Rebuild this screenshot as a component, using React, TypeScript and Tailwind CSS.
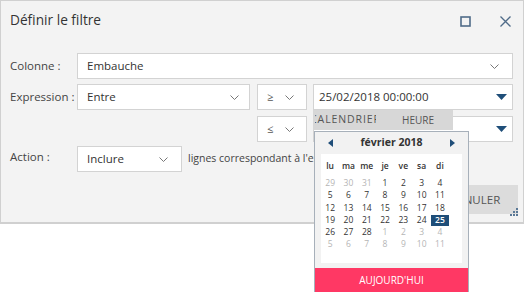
import React from "react";

const Chevron = () => (
  <svg width="9" height="5" viewBox="0 0 9 5" className="shrink-0">
    <path d="M0.5 0.5 L4.5 4.5 L8.5 0.5" fill="none" stroke="#777" strokeWidth="1" />
  </svg>
);

const Tri = () => (
  <svg width="11" height="6" viewBox="0 0 11 6" className="shrink-0">
    <path d="M0 0 H11 L5.5 6 Z" fill="#1f4e79" />
  </svg>
);

const weeks: [string, boolean][][] = [
  [["29", false], ["30", false], ["31", false], ["1", true], ["2", true], ["3", true], ["4", true]],
  [["5", true], ["6", true], ["7", true], ["8", true], ["9", true], ["10", true], ["11", true]],
  [["12", true], ["13", true], ["14", true], ["15", true], ["16", true], ["17", true], ["18", true]],
  [["19", true], ["20", true], ["21", true], ["22", true], ["23", true], ["24", true], ["25", true]],
  [["26", true], ["27", true], ["28", true], ["1", false], ["2", false], ["3", false], ["4", false]],
  [["5", false], ["6", false], ["7", false], ["8", false], ["9", false], ["10", false], ["11", false]],
];

export default function App() {
  return (
    <div className="relative w-[525px] h-[292px] overflow-hidden bg-white font-['Open_Sans',sans-serif] text-[11.5px] text-[#333]">
      {/* Dialog */}
      <div className="relative w-[524px] h-[224px] border border-b-2 border-[#d0d0d0] bg-[#f3f3f3] flex flex-col">
        {/* Header */}
        <div className="h-[40px] flex items-center justify-between pl-[9px] pr-[12px]">
          <span className="text-[13.7px] text-[#333] -mt-[1px]">Définir le filtre</span>
          <div className="flex items-center gap-[29px]">
            <svg width="11" height="11" viewBox="0 0 11 11">
              <rect x="1" y="1" width="9" height="9" fill="none" stroke="#4f6b88" strokeWidth="1.6" />
            </svg>
            <svg width="11" height="11" viewBox="0 0 11 11">
              <path d="M0.5 0.5 L10.5 10.5 M10.5 0.5 L0.5 10.5" stroke="#4f6b88" strokeWidth="1.3" />
            </svg>
          </div>
        </div>

        {/* Colonne */}
        <div className="mt-[12px] flex items-center pl-[9px]">
          <span className="w-[67px] text-[#444]">Colonne :</span>
          <div className="w-[436px] h-[26px] bg-white border border-[#d3d3d3] flex items-center justify-between pl-[9px] pr-[13px]">
            <span>Embauche</span>
            <Chevron />
          </div>
        </div>

        {/* Expression */}
        <div className="mt-[5px] flex items-center pl-[9px]">
          <span className="w-[67px] text-[#444]">Expression :</span>
          <div className="w-[173px] h-[26px] bg-white border border-[#d3d3d3] flex items-center justify-between pl-[9px] pr-[10px]">
            <span>Entre</span>
            <Chevron />
          </div>
          <div className="ml-[7px] w-[50px] h-[26px] bg-white border border-[#d3d3d3] flex items-center justify-between pl-[9px] pr-[12px]">
            <span className="text-[11px] text-[#555]">≥</span>
            <Chevron />
          </div>
          <div className="ml-[6px] w-[200px] h-[26px] bg-white border border-[#d3d3d3] flex items-center justify-between pl-[5px] pr-[5px]">
            <span>25/02/2018 00:00:00</span>
            <Tri />
          </div>
        </div>

        {/* Expression second line */}
        <div className="mt-[6px] flex items-center pl-[256px]">
          <div className="w-[50px] h-[26px] bg-white border border-[#d3d3d3] flex items-center justify-between pl-[9px] pr-[12px]">
            <span className="text-[11px] text-[#555]">≤</span>
            <Chevron />
          </div>
          <div className="ml-[6px] w-[200px] h-[26px] bg-white border border-[#d3d3d3] flex items-center justify-end pr-[5px]">
            <Tri />
          </div>
        </div>

        {/* Action */}
        <div className="mt-[4px] flex items-center pl-[9px]">
          <span className="w-[67px] text-[#444] -mt-[4px]">Action :</span>
          <div className="w-[105px] h-[26px] bg-white border border-[#d3d3d3] flex items-center justify-between pl-[9px] pr-[13px]">
            <span>Inclure</span>
            <Chevron />
          </div>
          <span className="ml-[6px] text-[10.5px] text-[#444] whitespace-nowrap">lignes correspondant à l'expression</span>
        </div>

        {/* Footer */}
        <div className="mt-[13px] flex justify-end pr-[5px]">
          <div className="w-[82px] h-[29px] bg-[#dcdcdc] flex items-center justify-center pr-[6px] text-[11.5px] text-[#555]">
            ANNULER
          </div>
        </div>

        {/* resize grip */}
        <svg className="absolute right-[5px] bottom-[6px]" width="8" height="8" viewBox="0 0 8 8">
          <rect x="6" y="0" width="2" height="2" fill="#5a7896" />
          <rect x="3" y="3" width="2" height="2" fill="#5a7896" />
          <rect x="6" y="3" width="2" height="2" fill="#5a7896" />
          <rect x="0" y="6" width="2" height="2" fill="#5a7896" />
          <rect x="3" y="6" width="2" height="2" fill="#5a7896" />
          <rect x="6" y="6" width="2" height="2" fill="#5a7896" />
        </svg>
      </div>

      {/* Date picker popup */}
      <div className="absolute left-[313px] top-[110px] w-[156px]">
        <div className="w-[140px] h-[20px] bg-[#d7d7d7] flex text-[10px] text-[#555]">
          <div className="w-[70px] h-full flex items-center">
            <div className="ml-[2px] w-[61px] h-full overflow-hidden flex items-center justify-center">
              <span className="whitespace-nowrap text-[10.5px] tracking-[0.9px]">CALENDRIER</span>
            </div>
          </div>
          <div className="w-[70px] h-full flex items-center justify-center">HEURE</div>
        </div>
        <div className="mt-[1px] ml-[1px] w-[155px] h-[170px] border-x border-t border-[#a7b0ba] bg-[#f2f2f2] flex flex-col">
          <div className="h-[22px] flex items-center justify-between pl-[13px] pr-[13px]">
            <svg width="5" height="8" viewBox="0 0 5 8"><path d="M5 0 V8 L0 4 Z" fill="#1f4e79" /></svg>
            <span className="text-[10.5px] font-bold text-[#333]">février 2018</span>
            <svg width="5" height="8" viewBox="0 0 5 8"><path d="M0 0 V8 L5 4 Z" fill="#1f4e79" /></svg>
          </div>
          <div className="ml-[6px] w-[141px] h-[109px] bg-white pt-[6px]">
            <div className="grid grid-cols-[repeat(7,18.3px)] h-[12px] items-center text-[8.5px] font-semibold text-[#333]">
              {["lu", "ma", "me", "je", "ve", "sa", "di"].map((d) => (
                <span key={d} className="text-center">{d}</span>
              ))}
            </div>
            <div className="mt-[5px] flex flex-col">
              {weeks.map((w, i) => (
                <div key={i} className="grid grid-cols-[repeat(7,18.3px)] h-[12.3px] items-center text-[8.5px]">
                  {w.map(([d, cur], j) =>
                    i === 3 && j === 6 ? (
                      <span key={j} className="h-[11px] bg-[#1f4e79] text-white font-semibold flex items-center justify-center">{d}</span>
                    ) : (
                      <span key={j} className={cur ? "text-center text-[#333]" : "text-center text-[#b5b5b5]"}>{d}</span>
                    )
                  )}
                </div>
              ))}
            </div>
          </div>
          <div className="mt-[5px] h-[30px] bg-[#ff3864] flex items-start justify-center pt-[5px] text-[10px] text-white">
            AUJOURD'HUI
          </div>
        </div>
      </div>
    </div>
  );
}
